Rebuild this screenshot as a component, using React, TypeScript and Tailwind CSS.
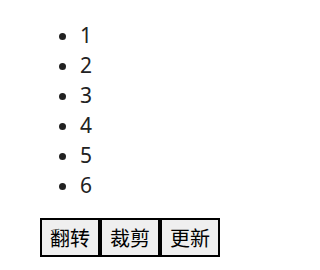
import React from 'react';

const items = ['1', '2', '3', '4', '5', '6'];
const actions = ['翻转', '裁剪', '更新'];

export default function App() {
  return (
    <div className="pl-[40px] pt-[20px] text-[20px] text-[#222] font-['Noto_Sans','Noto_Sans_CJK_SC',sans-serif] bg-white">
      {/* list */}
      <ul className="list-disc pl-[40px] mb-[18px] leading-[30px]">
        {items.map((n) => (
          <li key={n} className="text-[21px]">{n}</li>
        ))}
      </ul>

      {/* toolbar */}
      <div className="flex">
        {actions.map((a) => (
          <button
            key={a}
            className="w-[60px] h-[39px] border-2 border-black bg-[#efefef] text-black text-[20px] leading-[29px] px-[8px] font-['Noto_Sans_CJK_SC',sans-serif]"
          >
            {a}
          </button>
        ))}
      </div>
    </div>
  );
}
